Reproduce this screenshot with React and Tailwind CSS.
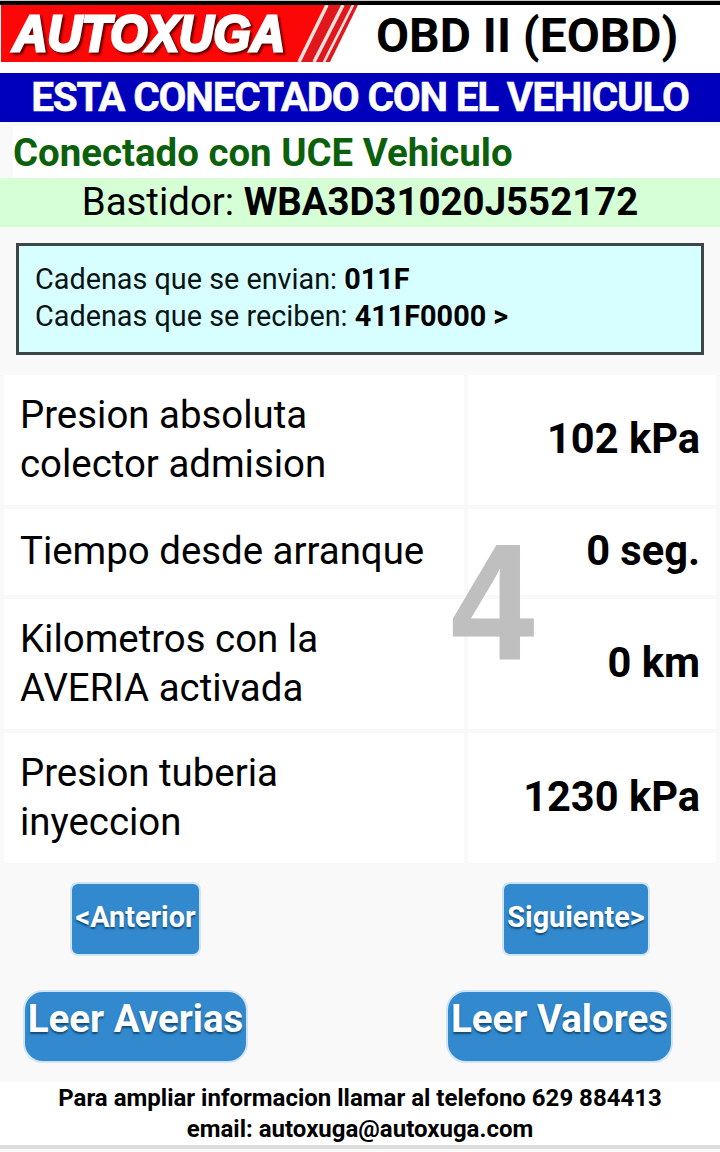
const rows = [
  { label: ['Presion absoluta', 'colector admision'], value: '102 kPa' },
  { label: ['Tiempo desde arranque'], value: '0 seg.' },
  { label: ['Kilometros con la', 'AVERIA activada'], value: '0 km' },
  { label: ['Presion tuberia', 'inyeccion'], value: '1230 kPa' },
];

function Logo() {
  return (
    <svg width="360" height="57" viewBox="0 5 360 57" className="block shrink-0">
      <path d="M1 5H327L299 62H1Z" fill="#fb0707" />
      <path d="M327 5H358L330 62H299Z" fill="#e2161d" />
      <path d="M327 5L299 62M343 5L314 62" stroke="#fbe4dc" strokeWidth="3.5" />
      <path d="M353 5L324 62" stroke="#fbe4dc" strokeWidth="2.6" />
      <text
        x="13"
        y="51"
        textLength="272"
        lengthAdjust="spacingAndGlyphs"
        fill="#fff"
        stroke="#fff"
        strokeWidth="3"
        className="font-['Liberation_Sans',sans-serif] text-[49.5px] font-bold italic [filter:drop-shadow(2px_2px_1px_#5c0000)]"
      >
        AUTOXUGA
      </text>
    </svg>
  );
}

function NavButton({ children, className }) {
  return (
    <button
      className={`rounded-lg border-2 border-[#cfe5f7] bg-[#3289ce] pb-[3px] text-[28.8px] font-bold whitespace-nowrap text-white [text-shadow:0_2px_2px_#124b78] ${className}`}
    >
      {children}
    </button>
  );
}

function ActionButton({ children, className }) {
  return (
    <button
      className={`h-[73px] rounded-[20px] border-2 border-[#cfe5f7] bg-[#3289ce] pb-[15px] text-[38.5px] leading-none font-bold whitespace-nowrap text-white [text-shadow:0_2px_2px_#124b78] ${className}`}
    >
      {children}
    </button>
  );
}

export default function App() {
  return (
    <div className="relative flex h-[1152px] w-[720px] flex-col overflow-hidden bg-[#f9f9f9] font-['Roboto',sans-serif] text-black">
      <div className="h-[5px] shrink-0 border-t border-[#c8c8c8] bg-black" />

      <header className="flex h-[68px] shrink-0 items-start bg-white">
        <Logo />
        <h1 className="ml-4 pt-[3px] text-[48px] leading-[56px] font-bold whitespace-nowrap">OBD II (EOBD)</h1>
      </header>

      <div className="h-[49px] shrink-0 bg-[#0000bc] text-center text-[40.5px] leading-[49px] font-bold tracking-[-1.2px] whitespace-nowrap text-white [-webkit-text-stroke:0.5px_white]">
        ESTA CONECTADO CON EL VEHICULO
      </div>

      <div className="h-14 shrink-0 pt-1 pl-[13px]">
        <div className="h-[52px] bg-white text-[38.4px] leading-[54px] font-bold text-[#0b610b]">Conectado con UCE Vehiculo</div>
      </div>

      <div className="h-[49px] shrink-0 bg-[#d6ffd6] text-center text-[38.4px] leading-[48px]">
        Bastidor: <b>WBA3D31020J552172</b>
      </div>

      <div className="mx-4 mt-4 h-28 shrink-0 border-[3px] border-[#3c4646] bg-[#d8ffff] pt-[15px] pl-4 text-[28.8px] leading-[37px] text-[#081414]">
        <p>Cadenas que se envian: <b className="text-black">011F</b></p>
        <p>Cadenas que se reciben: <b className="text-black">411F0000 &gt;</b></p>
      </div>

      <div className="mx-1 mt-5 grid shrink-0 grid-cols-[460px_248px] grid-rows-[130px_86px_130px_130px] gap-1">
        {rows.map((row) => (
          <div key={row.value} className="contents">
            <div className="flex flex-col justify-center bg-white pb-[3px] pl-4 text-[38.4px] leading-[49px]">
              {row.label.map((line) => (
                <span key={line}>{line}</span>
              ))}
            </div>
            <div className="flex items-center justify-end bg-white pr-4 pb-[2px] text-[41.6px] font-bold">{row.value}</div>
          </div>
        ))}
      </div>

      <div className="flex h-[219px] shrink-0 flex-col pt-[19px]">
        <div className="flex">
          <NavButton className="ml-[70px] h-[74px] w-[131px]">&lt;Anterior</NavButton>
          <NavButton className="ml-[301px] h-[74px] w-[148px]">Siguiente&gt;</NavButton>
        </div>
        <div className="mt-[34px] flex">
          <ActionButton className="ml-[23px] w-[225px]">Leer Averias</ActionButton>
          <ActionButton className="ml-[198px] w-[227px]">Leer Valores</ActionButton>
        </div>
      </div>

      <footer className="h-[67px] shrink-0 border-b-[4px] border-[#dcdcdc] bg-white pt-px text-center text-[24px] leading-[31px] font-bold">
        <p>Para ampliar informacion llamar al telefono 629 884413</p>
        <p>email: autoxuga@autoxuga.com</p>
      </footer>

      {/* page number floating over the table */}
      <div className="absolute top-[508px] left-[451px] origin-left scale-x-[0.905] font-['Liberation_Sans',sans-serif] text-[165px] leading-[189px] font-bold text-[#bfbfbf] [-webkit-text-stroke:1px_#bfbfbf]">4</div>
    </div>
  );
}
